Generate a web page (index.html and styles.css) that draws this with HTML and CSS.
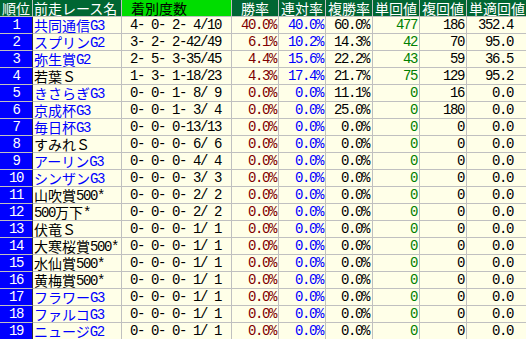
FILE: index.html
```html
<!DOCTYPE html>
<html lang="ja">
<head>
<meta charset="utf-8">
<title>前走レース別成績</title>
<link rel="stylesheet" href="styles.css">
</head>
<body>
<table class="tbl">
  <thead>
    <tr>
      <th class="c-rk">順位</th>
      <th class="c-nm">前走レース名</th>
      <th class="c-rec">着別度数</th>
      <th class="c-n">勝率</th>
      <th class="c-n">連対率</th>
      <th class="c-n">複勝率</th>
      <th class="c-n">単回値</th>
      <th class="c-n">複回値</th>
      <th class="c-last">単適回値</th>
    </tr>
  </thead>
  <tbody>
    <tr><td class="rk">1</td><td class="nm g">共同通信<span class="a">G3</span></td><td class="rec">4- 0- 2- 4/10</td><td class="w">40.0%</td><td class="r">40.0%</td><td class="p">60.0%</td><td class="tw">477</td><td class="fp">186</td><td class="ta">352.4</td></tr>
    <tr><td class="rk">2</td><td class="nm g">スプリン<span class="a">G2</span></td><td class="rec">3- 2- 2-42/49</td><td class="w">6.1%</td><td class="r">10.2%</td><td class="p">14.3%</td><td class="tw">42</td><td class="fp">70</td><td class="ta">95.0</td></tr>
    <tr><td class="rk">3</td><td class="nm g">弥生賞<span class="a">G2</span></td><td class="rec">2- 5- 3-35/45</td><td class="w">4.4%</td><td class="r">15.6%</td><td class="p">22.2%</td><td class="tw">43</td><td class="fp">59</td><td class="ta">36.5</td></tr>
    <tr><td class="rk">4</td><td class="nm">若葉Ｓ</td><td class="rec">1- 3- 1-18/23</td><td class="w">4.3%</td><td class="r">17.4%</td><td class="p">21.7%</td><td class="tw">75</td><td class="fp">129</td><td class="ta">95.2</td></tr>
    <tr><td class="rk">5</td><td class="nm g">きさらぎ<span class="a">G3</span></td><td class="rec">0- 0- 1- 8/ 9</td><td class="w">0.0%</td><td class="r">0.0%</td><td class="p">11.1%</td><td class="tw">0</td><td class="fp">16</td><td class="ta">0.0</td></tr>
    <tr><td class="rk">6</td><td class="nm g">京成杯<span class="a">G3</span></td><td class="rec">0- 0- 1- 3/ 4</td><td class="w">0.0%</td><td class="r">0.0%</td><td class="p">25.0%</td><td class="tw">0</td><td class="fp">180</td><td class="ta">0.0</td></tr>
    <tr><td class="rk">7</td><td class="nm g">毎日杯<span class="a">G3</span></td><td class="rec">0- 0- 0-13/13</td><td class="w">0.0%</td><td class="r">0.0%</td><td class="p">0.0%</td><td class="tw">0</td><td class="fp">0</td><td class="ta">0.0</td></tr>
    <tr><td class="rk">8</td><td class="nm">すみれＳ</td><td class="rec">0- 0- 0- 6/ 6</td><td class="w">0.0%</td><td class="r">0.0%</td><td class="p">0.0%</td><td class="tw">0</td><td class="fp">0</td><td class="ta">0.0</td></tr>
    <tr><td class="rk">9</td><td class="nm g">アーリン<span class="a">G3</span></td><td class="rec">0- 0- 0- 4/ 4</td><td class="w">0.0%</td><td class="r">0.0%</td><td class="p">0.0%</td><td class="tw">0</td><td class="fp">0</td><td class="ta">0.0</td></tr>
    <tr><td class="rk">10</td><td class="nm g">シンザン<span class="a">G3</span></td><td class="rec">0- 0- 0- 3/ 3</td><td class="w">0.0%</td><td class="r">0.0%</td><td class="p">0.0%</td><td class="tw">0</td><td class="fp">0</td><td class="ta">0.0</td></tr>
    <tr><td class="rk">11</td><td class="nm">山吹賞<span class="a">500*</span></td><td class="rec">0- 0- 0- 2/ 2</td><td class="w">0.0%</td><td class="r">0.0%</td><td class="p">0.0%</td><td class="tw">0</td><td class="fp">0</td><td class="ta">0.0</td></tr>
    <tr><td class="rk">12</td><td class="nm"><span class="a">500</span>万下<span class="a">*</span></td><td class="rec">0- 0- 0- 2/ 2</td><td class="w">0.0%</td><td class="r">0.0%</td><td class="p">0.0%</td><td class="tw">0</td><td class="fp">0</td><td class="ta">0.0</td></tr>
    <tr><td class="rk">13</td><td class="nm">伏竜Ｓ</td><td class="rec">0- 0- 0- 1/ 1</td><td class="w">0.0%</td><td class="r">0.0%</td><td class="p">0.0%</td><td class="tw">0</td><td class="fp">0</td><td class="ta">0.0</td></tr>
    <tr><td class="rk">14</td><td class="nm">大寒桜賞<span class="a">500*</span></td><td class="rec">0- 0- 0- 1/ 1</td><td class="w">0.0%</td><td class="r">0.0%</td><td class="p">0.0%</td><td class="tw">0</td><td class="fp">0</td><td class="ta">0.0</td></tr>
    <tr><td class="rk">15</td><td class="nm">水仙賞<span class="a">500*</span></td><td class="rec">0- 0- 0- 1/ 1</td><td class="w">0.0%</td><td class="r">0.0%</td><td class="p">0.0%</td><td class="tw">0</td><td class="fp">0</td><td class="ta">0.0</td></tr>
    <tr><td class="rk">16</td><td class="nm">黄梅賞<span class="a">500*</span></td><td class="rec">0- 0- 0- 1/ 1</td><td class="w">0.0%</td><td class="r">0.0%</td><td class="p">0.0%</td><td class="tw">0</td><td class="fp">0</td><td class="ta">0.0</td></tr>
    <tr><td class="rk">17</td><td class="nm g">フラワー<span class="a">G3</span></td><td class="rec">0- 0- 0- 1/ 1</td><td class="w">0.0%</td><td class="r">0.0%</td><td class="p">0.0%</td><td class="tw">0</td><td class="fp">0</td><td class="ta">0.0</td></tr>
    <tr><td class="rk">18</td><td class="nm g">ファルコ<span class="a">G3</span></td><td class="rec">0- 0- 0- 1/ 1</td><td class="w">0.0%</td><td class="r">0.0%</td><td class="p">0.0%</td><td class="tw">0</td><td class="fp">0</td><td class="ta">0.0</td></tr>
    <tr><td class="rk">19</td><td class="nm g">ニュージ<span class="a">G2</span></td><td class="rec">0- 0- 0- 1/ 1</td><td class="w">0.0%</td><td class="r">0.0%</td><td class="p">0.0%</td><td class="tw">0</td><td class="fp">0</td><td class="ta">0.0</td></tr>
  </tbody>
</table>
</body>
</html>
```

FILE: styles.css
```css
html, body {
  margin: 0;
  padding: 0;
  background: #ffffe8;
  overflow: hidden;
}

.tbl {
  border-collapse: separate;
  border-spacing: 0;
  table-layout: fixed;
  width: 528px;
  font-family: "Noto Sans CJK JP", sans-serif;
  font-size: 14px;
  line-height: 16px;
}

.tbl tr {
  height: 17px;
}

.tbl th,
.tbl td {
  box-sizing: border-box;
  height: 17px;
  padding: 0;
  line-height: 16px;
  border-right: 1px solid #c0c0c0;
  border-bottom: 1px solid #c0c0c0;
  white-space: pre;
  overflow: hidden;
  vertical-align: middle;
}

.tbl th {
  background: #006633;
  color: #ffffff;
  font-weight: normal;
  text-align: center;
}

.c-rk { width: 33px; }
.tbl th.c-nm { width: 89px; text-align: left; padding-left: 1px; }
.tbl th.c-rec { width: 110px; text-align: left; padding-left: 9px; background: #00dd00; color: #000000; }
.c-n { width: 47px; }
.c-last { width: 61px; padding-right: 4px; }

.tbl td {
  background: #ffffe8;
  color: #000000;
}

.tbl td.rk {
  background: #0000ff;
  color: #ffffff;
  text-align: center;
  border-right-color: #303030;
  font-family: "Liberation Mono", monospace;
  letter-spacing: -1.4px;
}

.tbl td.nm {
  padding-left: 1px;
  color: #000000;
}

.tbl td.nm.g {
  color: #0000ff;
}

.a {
  font-family: "Liberation Mono", monospace;
  letter-spacing: -1.4px;
  line-height: 1px;
  vertical-align: 1px;
}

.tbl td.rec,
.tbl td.w,
.tbl td.r,
.tbl td.p,
.tbl td.tw,
.tbl td.fp,
.tbl td.ta {
  font-family: "Liberation Mono", monospace;
  letter-spacing: -1.4px;
}

.tbl td.rec {
  padding-left: 8px;
  text-align: left;
}

.tbl td.w,
.tbl td.r,
.tbl td.p,
.tbl td.tw,
.tbl td.fp,
.tbl td.ta {
  text-align: right;
}

.tbl td.w { color: #800000; padding-right: 2px; }
.tbl td.r { color: #0000ff; padding-right: 2px; }
.tbl td.p { padding-right: 3px; }
.tbl td.tw { color: #008000; padding-right: 2px; }
.tbl td.fp { padding-right: 2px; }
.tbl td.ta { padding-right: 14px; }
```
